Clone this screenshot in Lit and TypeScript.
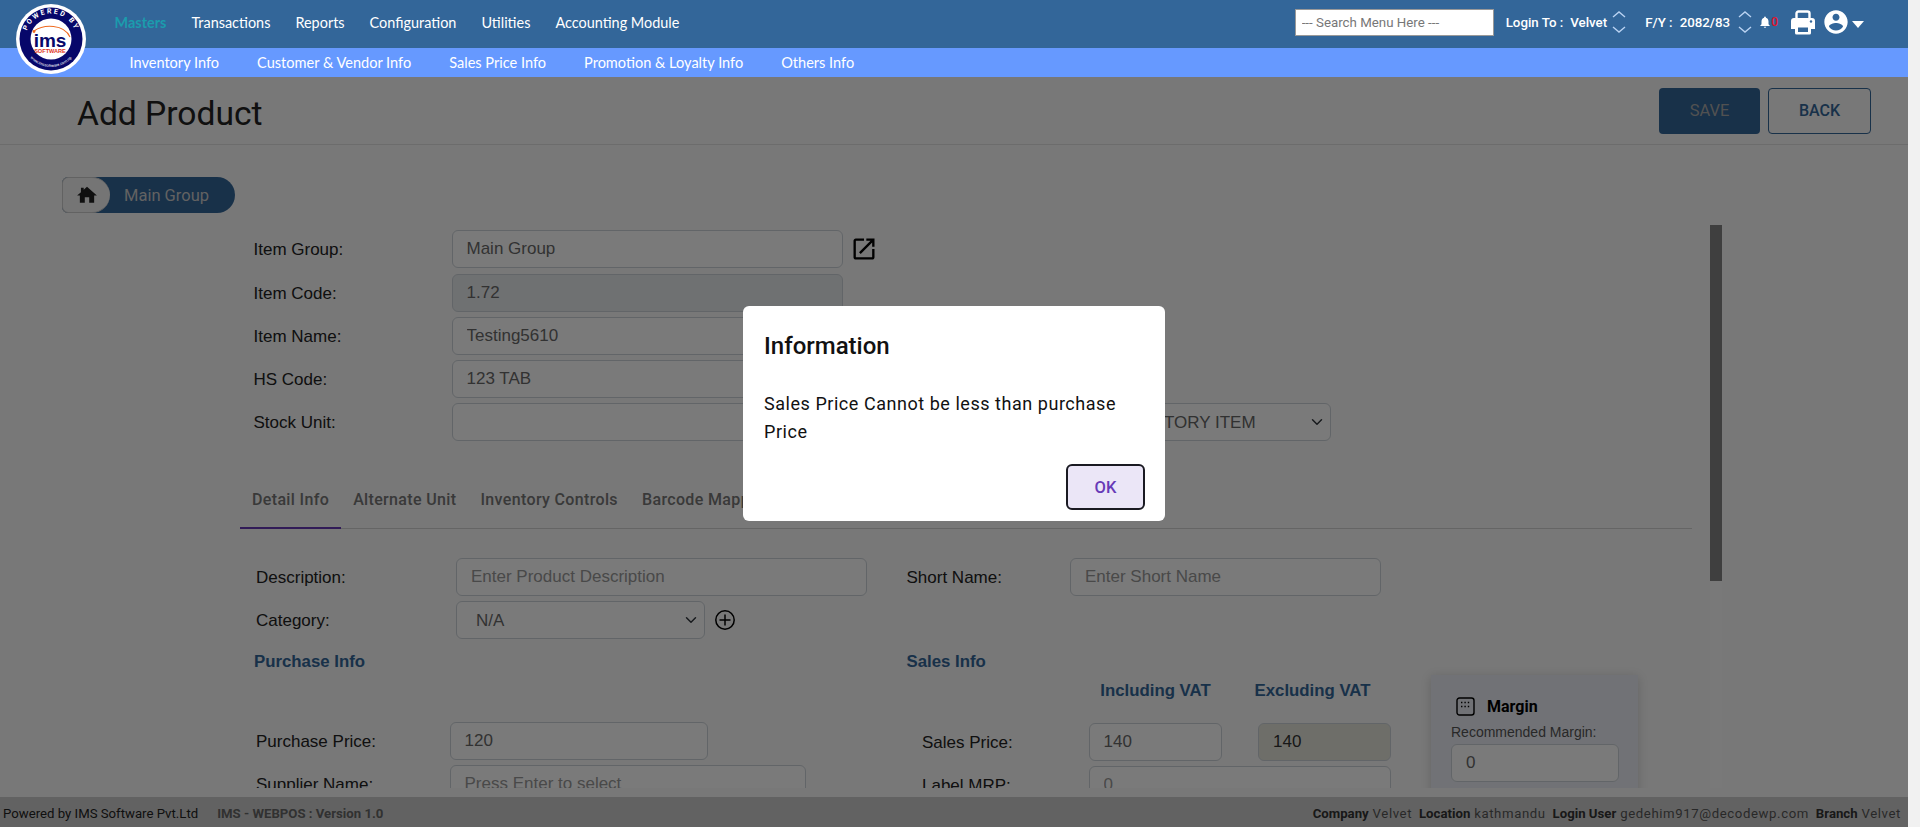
import { LitElement, html, css } from 'lit';
import { customElement } from 'lit/decorators.js';

const updown = html`<svg class="updown" viewBox="0 0 16 28" width="16" height="28"><path d="M2 9l6-5 6 5M2 19l6 5 6-5" fill="none" stroke="#b9d2f2" stroke-width="1.4"/></svg>`;

@customElement('app-root')
export class AppRoot extends LitElement {
  static styles = css`
    :host { display: block; height: 827px; overflow: hidden; background: #f1f1f1; font-family: Roboto, sans-serif; }
    .shell { position: relative; width: 1908px; height: 827px; background: #fafafa; display: flex; flex-direction: column; overflow: hidden; }

    header { position: relative; z-index: 20; height: 77px; flex: none; }
    .top { height: 48px; background: #336699; display: flex; align-items: center; padding: 0 0 4px 114.5px; box-sizing: border-box; color: #fff; font: 400 14.45px Lato, sans-serif; }
    .menu { display: flex; gap: 25px; }
    .menu .on { color: #1b9cad; font-weight: 700; }
    .tools { margin-left: auto; display: flex; align-items: center; font-family: Roboto, sans-serif; font-weight: 500; }
    .search { width: 199px; height: 27px; box-sizing: border-box; border: 1px solid #999; background: #fff; padding: 0 6px; font: 13.3px Roboto, sans-serif; outline: none; }
    .search::placeholder { color: #777; opacity: 1; }
    .tools span { white-space: nowrap; font-size: 13.3px; }
    .updown { display: block; }
    .sub { height: 29px; background: #6699ff; display: flex; gap: 38px; align-items: center; padding: 0 0 1px 129.5px; box-sizing: border-box; color: #fff; font: 400 14.55px Lato, sans-serif; }
    .logo { position: absolute; left: 16px; top: 4px; width: 70px; height: 70px; }

    .titlebar { height: 68px; flex: none; box-sizing: border-box; border-bottom: 1px solid #e2e2e2; display: flex; align-items: center; padding: 0 37px 0 77px; }
    h1 { margin: 6px 0 0; font-size: 33.6px; font-weight: 400; color: #222; flex: 1; }
    .btn { height: 46px; box-sizing: border-box; border-radius: 4px; font: 500 16px Roboto, sans-serif; }
    .save { width: 101px; background: #336699; border: 0; color: #aaa; margin-right: 8px; font-weight: 400; font-size: 16.5px; }
    .back { width: 103px; background: transparent; border: 1px solid #336699; color: #336699; }

    .crumbs { height: 80px; flex: none; padding: 32px 0 0 62px; box-sizing: border-box; }
    .crumb { position: relative; width: 173px; height: 36px; background: #336699; border-radius: 6px 18px 18px 6px; color: #ccc; font-size: 16.5px; display: flex; align-items: center; padding-left: 62px; box-sizing: border-box; }
    .home { position: absolute; left: 0; top: 0; width: 48px; height: 36px; box-sizing: border-box; background: #f4f4f4; border: 1px solid #ccc; border-right: 0; border-radius: 6px 18px 18px 6px; display: flex; align-items: center; padding-left: 13px; }

    .work { height: 563px; flex: none; display: flex; padding-left: 240px; overflow: hidden; }
    .form { width: 1452px; padding-top: 5px; flex: none; font-family: "Liberation Sans", Arial, sans-serif; }
    .track { margin-left: 18px; width: 12px; background: #fdfdfd; flex: none; }
    .thumb { height: 356px; background: #858585; }

    .row { display: flex; align-items: center; height: 38px; margin-bottom: 5px; }
    label { font-size: 17px; color: #222; flex: none; white-space: nowrap; padding-top: 2px; }
    .ctl { height: 100%; box-sizing: border-box; border: 1px solid #ced4da; border-radius: 6px; background: #fff; padding: 0 14px; font: 17px "Liberation Sans", Arial, sans-serif; color: #6a6a6a; outline: none; flex: none; }
    .ctl::placeholder { color: #999; opacity: 1; }
    .ctl.off { background: #e9ecef; }
    select.ctl { appearance: none; background-image: url("data:image/svg+xml,%3csvg xmlns='http://www.w3.org/2000/svg' viewBox='0 0 16 16'%3e%3cpath fill='none' stroke='%23343a40' stroke-linecap='round' stroke-linejoin='round' stroke-width='2' d='m2 5 6 6 6-6'/%3e%3c/svg%3e"); background-repeat: no-repeat; background-position: right 6px center; background-size: 14px 12px; }
    .top-form label { width: 211.5px; padding-left: 13.5px; box-sizing: border-box; }
    .top-form .ctl { width: 391.5px; }
    .top-form .link { margin-left: 7px; display: block; }
    .top-form .kind { width: 231px; margin-left: auto; color: #666; padding: 0 2px 0 11.5px; }
    .top-form .row:last-child { width: 1090.5px; }
    .top-form .row:first-child { margin-bottom: 6px; }

    .tabs { display: flex; margin-top: 39px; height: 48px; border-bottom: 1px solid #d4d4d4; font: 500 16px Roboto, sans-serif; letter-spacing: .35px; color: #777; box-sizing: content-box; }
    .tab { padding: 0 12px 10px; display: flex; align-items: center; position: relative; white-space: nowrap; }
    .tab.on::after { content: ""; position: absolute; left: 0; right: 0; bottom: -1px; height: 2px; background: #673ab7; }

    .detail { display: flex; padding-top: 29px; }
    .left { width: 666.5px; flex: none; }
    .left .row label { width: 216px; padding-left: 16px; box-sizing: border-box; }
    .left .price label { width: 209.5px; }
    .desc { width: 411px; }
    .cat { width: 249px; padding-left: 19px; }
    .plus { margin-left: 9px; display: block; }
    h3 { margin: 13px 0 0 14px; font: bold 16.8px/20px "Liberation Sans", Arial, sans-serif; color: #336699; }
    .price { margin-top: 50px; }
    .price .ctl { width: 258.5px; }
    .left .price + .row .ctl { width: 356.5px; }
    .left .price + .row label { width: 209.5px; }

    .right { flex: 1; }
    .right > .row label { width: 163.5px; }
    .short { width: 311px; }
    .bottom { display: flex; margin-top: 56px; }
    .sales { width: 524.5px; flex: none; }
    .sales h3 { margin: 0; }
    .vat { display: flex; margin-top: 9px; font: bold 16.8px/20px "Liberation Sans", Arial, sans-serif; color: #336699; padding-left: 183px; }
    .vat div { width: 132px; text-align: center; white-space: nowrap; }
    .vat div + div { margin-left: 25px; }
    .sp { margin-top: 22px; }
    .sales .row label { width: 182px; padding-left: 15.5px; box-sizing: border-box; }
    .sales .sp .ctl { width: 133px; }
    .sales .sp .ctl + .ctl { width: 133px; margin-left: 36.5px; background: #e6e7dc; color: #333; }
    .sales .mrp .ctl { width: 302.5px; }

    .margin { width: 207px; height: 200px; flex: none; margin-top: 23px; background: #eceff6; box-sizing: border-box; padding: 22px 18px 0 20px; box-shadow: 0 2px 10px rgba(0,0,0,.16); }
    .margin .hd { display: flex; align-items: center; gap: 12px; font: bold 16px Roboto, sans-serif; color: #000; padding-left: 5px; height: 19px; }
    .margin label { display: block; font-size: 14px; color: #555; margin-top: 8px; line-height: 16px; padding-top: 0; }
    .margin .ctl { display: block; width: 168px; height: 38px; margin-top: 4px; }

    footer { margin-top: 9px; height: 30px; flex: none; background: #cecece; display: flex; align-items: center; padding: 2px 7px 0 3px; box-sizing: border-box; font-size: 13.2px; color: #222; white-space: nowrap; }
    .ver { margin-left: 19px; font-weight: 700; color: #666; }
    .who { margin-left: auto; color: #555; letter-spacing: .6px; }
    .who b { color: #333; margin-left: 3px; letter-spacing: 0; }

    .overlay { position: absolute; inset: 0; z-index: 10; background: rgba(0,0,0,.52); display: flex; align-items: center; justify-content: center; }
    .dialog { width: 422px; height: 215px; box-sizing: border-box; background: #fff; border-radius: 6px; padding: 24px 20px 10px 21px; display: flex; flex-direction: column; color: #111; }
    .dialog h2 { margin: 0; font-size: 24px; line-height: 32px; font-weight: 500; }
    .dialog p { margin: 28px 0 0; font-size: 18px; line-height: 28px; letter-spacing: .54px; }
    .ok { align-self: flex-end; margin-top: auto; margin-bottom: 1px; width: 79px; height: 46px; box-sizing: border-box; border: 2px solid #1a1a22; border-radius: 6px; background: #ebe6f7; color: #673ab7; font: 500 16.5px Roboto, sans-serif; }
  `;

  render() {
    return html`
      <div class="shell">
        <header>
          <div class="top">
            <div class="menu">
              <span class="on">Masters</span><span>Transactions</span><span>Reports</span><span>Configuration</span><span>Utilities</span><span>Accounting Module</span>
            </div>
            <div class="tools">
              <input class="search" placeholder="--- Search Menu Here ---" />
              <span style="margin-left:12px">Login To :</span>
              <span style="margin-left:7px">Velvet</span>
              <span style="margin-left:4px">${updown}</span>
              <span style="margin-left:18px">F/Y :</span>
              <span style="margin-left:7px">2082/83</span>
              <span style="margin-left:7px">${updown}</span>
              <svg style="margin-left:5px" width="14" height="16" viewBox="0 0 24 24"><path fill="#fff" d="M12 22c1.1 0 2-.9 2-2h-4c0 1.1.9 2 2 2zm6-6v-5c0-3.1-1.6-5.6-4.5-6.3V4c0-.8-.7-1.5-1.5-1.5s-1.5.7-1.5 1.5v.7C7.6 5.4 6 7.9 6 11v5l-2 2v1h16v-1l-2-2z"/></svg>
              <span style="color:#e0142c;font-size:12px;margin-left:-1px">0</span>
              <svg style="margin-left:12px" width="26" height="26" viewBox="0 0 26 26"><path fill="none" stroke="#fff" stroke-width="2.4" d="M6.5 10V4.5a2 2 0 0 1 2-2h9a2 2 0 0 1 2 2V10"/><path fill="#fff" d="M4 9h18a3 3 0 0 1 3 3v8h-4v-3H5v3H1v-8a3 3 0 0 1 3-3z"/><path fill="#fff" d="M5 16h16v8a1.5 1.5 0 0 1-1.5 1.5h-13A1.5 1.5 0 0 1 5 24z"/><rect x="8" y="18.5" width="10" height="4.5" fill="#336699"/><circle cx="21" cy="12.5" r="1.2" fill="#336699"/></svg>
              <svg style="margin-left:6px" width="28" height="28" viewBox="0 0 24 24"><path fill="#fff" d="M12 2C6.48 2 2 6.48 2 12s4.48 10 10 10 10-4.48 10-10S17.52 2 12 2zm0 3c1.66 0 3 1.34 3 3s-1.34 3-3 3-3-1.34-3-3 1.34-3 3-3zm0 14.2c-2.5 0-4.71-1.28-6-3.22.03-1.99 4-3.08 6-3.08 1.99 0 5.97 1.09 6 3.08-1.29 1.94-3.5 3.22-6 3.22z"/></svg>
              <svg style="margin:4px 44px 0 2px" width="12" height="7" viewBox="0 0 12 7"><path fill="#fff" d="M0 0h12L6 7z"/></svg>
            </div>
          </div>
          <div class="sub">
            <span>Inventory Info</span><span>Customer &amp; Vendor Info</span><span>Sales Price Info</span><span>Promotion &amp; Loyalty Info</span><span>Others Info</span>
          </div>
          <svg class="logo" viewBox="0 0 70 70">
            <circle cx="35" cy="35" r="35" fill="#fff"/>
            <circle cx="35" cy="35" r="31.5" fill="#07076a"/>
            <circle cx="35" cy="35" r="20.5" fill="#fff"/>
            <defs>
              <path id="arcTop" d="M9.5 35a25.5 25.5 0 0 1 51 0"/>
              <path id="arcBot" d="M7 35a28 28 0 0 0 56 0"/>
            </defs>
            <text font-family="Roboto" font-weight="700" font-size="7" fill="#fff" letter-spacing="2"><textPath href="#arcTop" startOffset="50%" text-anchor="middle">POWERED BY</textPath></text>
            <text font-family="Roboto" font-size="4" fill="#fff"><textPath href="#arcBot" startOffset="50%" text-anchor="middle">www.imssoftware.com.np</textPath></text>
            <path d="M18 27C28 20 48 20 54 33" fill="none" stroke="#ef6a1f" stroke-width="1.1"/>
            <circle cx="18" cy="27.5" r="1.4" fill="#ef6a1f"/>
            <text x="34" y="43" text-anchor="middle" font-family="Liberation Sans" font-weight="700" font-size="19" fill="#07076a">ims</text>
            <text x="34" y="48.5" text-anchor="middle" font-family="Liberation Sans" font-weight="700" font-size="5.6" fill="#e0341c">SOFTWARE</text>
          </svg>
        </header>

        <div class="titlebar">
          <h1>Add Product</h1>
          <button class="btn save">SAVE</button>
          <button class="btn back">BACK</button>
        </div>

        <div class="crumbs">
          <div class="crumb">
            <div class="home"><svg width="22" height="22" viewBox="0 0 20 20"><path fill="#222" d="M8 17v-5h4v5h4.5v-6.5H19L10 2.5 7 5.2V3.5H4.5v3.9L1 10.5h2.5V17z"/></svg></div>
            Main Group
          </div>
        </div>

        <div class="work">
          <div class="form">
            <div class="top-form">
              <div class="row">
                <label>Item Group:</label><input class="ctl" value="Main Group" />
                <svg class="link" width="28" height="28" viewBox="0 0 24 24"><path fill="#000" d="M19 19H5V5h7V3H5c-1.11 0-2 .9-2 2v14c0 1.1.89 2 2 2h14c1.1 0 2-.9 2-2v-7h-2v7zM14 3v2h3.59l-9.83 9.83 1.41 1.41L19 6.41V10h2V3h-7z"/></svg>
              </div>
              <div class="row"><label>Item Code:</label><input class="ctl off" value="1.72" /></div>
              <div class="row"><label>Item Name:</label><input class="ctl" value="Testing5610" /></div>
              <div class="row"><label>HS Code:</label><input class="ctl" value="123 TAB" /></div>
              <div class="row">
                <label>Stock Unit:</label><input class="ctl" />
                <select class="ctl kind"><option>INVENTORY ITEM</option></select>
              </div>
            </div>

            <div class="tabs">
              <div class="tab on">Detail Info</div>
              <div class="tab">Alternate Unit</div>
              <div class="tab">Inventory Controls</div>
              <div class="tab">Barcode Mapping</div>
            </div>

            <div class="detail">
              <div class="left">
                <div class="row"><label>Description:</label><input class="ctl desc" placeholder="Enter Product Description" /></div>
                <div class="row">
                  <label>Category:</label>
                  <select class="ctl cat"><option>N/A</option></select>
                  <svg class="plus" width="22" height="22" viewBox="0 0 22 22"><circle cx="11" cy="11" r="9.2" fill="none" stroke="#000" stroke-width="1.5"/><path d="M11 5.5v11M5.5 11h11" stroke="#000" stroke-width="1.5"/></svg>
                </div>
                <h3>Purchase Info</h3>
                <div class="row price"><label>Purchase Price:</label><input class="ctl" value="120" /></div>
                <div class="row"><label>Supplier Name:</label><input class="ctl" placeholder="Press Enter to select" /></div>
              </div>

              <div class="right">
                <div class="row"><label>Short Name:</label><input class="ctl short" placeholder="Enter Short Name" /></div>
                <div class="bottom">
                  <div class="sales">
                    <h3>Sales Info</h3>
                    <div class="vat"><div>Including VAT</div><div>Excluding VAT</div></div>
                    <div class="row sp"><label>Sales Price:</label><input class="ctl" value="140" /><input class="ctl" value="140" /></div>
                    <div class="row mrp"><label>Label MRP:</label><input class="ctl" placeholder="0" /></div>
                  </div>
                  <div class="margin">
                    <div class="hd">
                      <svg width="19" height="19" viewBox="0 0 19 19"><rect x="1" y="1" width="17" height="17" rx="2.5" fill="none" stroke="#000" stroke-width="1.4"/><path d="M5 5.5h9M5 9.5h9" stroke="#000" stroke-width="1.4" stroke-dasharray="1.4 2"/></svg>
                      Margin
                    </div>
                    <label>Recommended Margin:</label>
                    <input class="ctl" value="0" />
                    <label>Actual Margin:</label>
                  </div>
                </div>
              </div>
            </div>
          </div>
          <div class="track"><div class="thumb"></div></div>
        </div>

        <footer>
          <span>Powered by IMS Software Pvt.Ltd</span>
          <span class="ver">IMS - WEBPOS : Version 1.0</span>
          <span class="who"><b>Company</b> Velvet <b>Location</b> kathmandu <b>Login User</b> gedehim917@decodewp.com <b>Branch</b> Velvet</span>
        </footer>

        <div class="overlay">
          <div class="dialog">
            <h2>Information</h2>
            <p>Sales Price Cannot be less than purchase Price</p>
            <button class="ok">OK</button>
          </div>
        </div>
      </div>
    `;
  }
}
